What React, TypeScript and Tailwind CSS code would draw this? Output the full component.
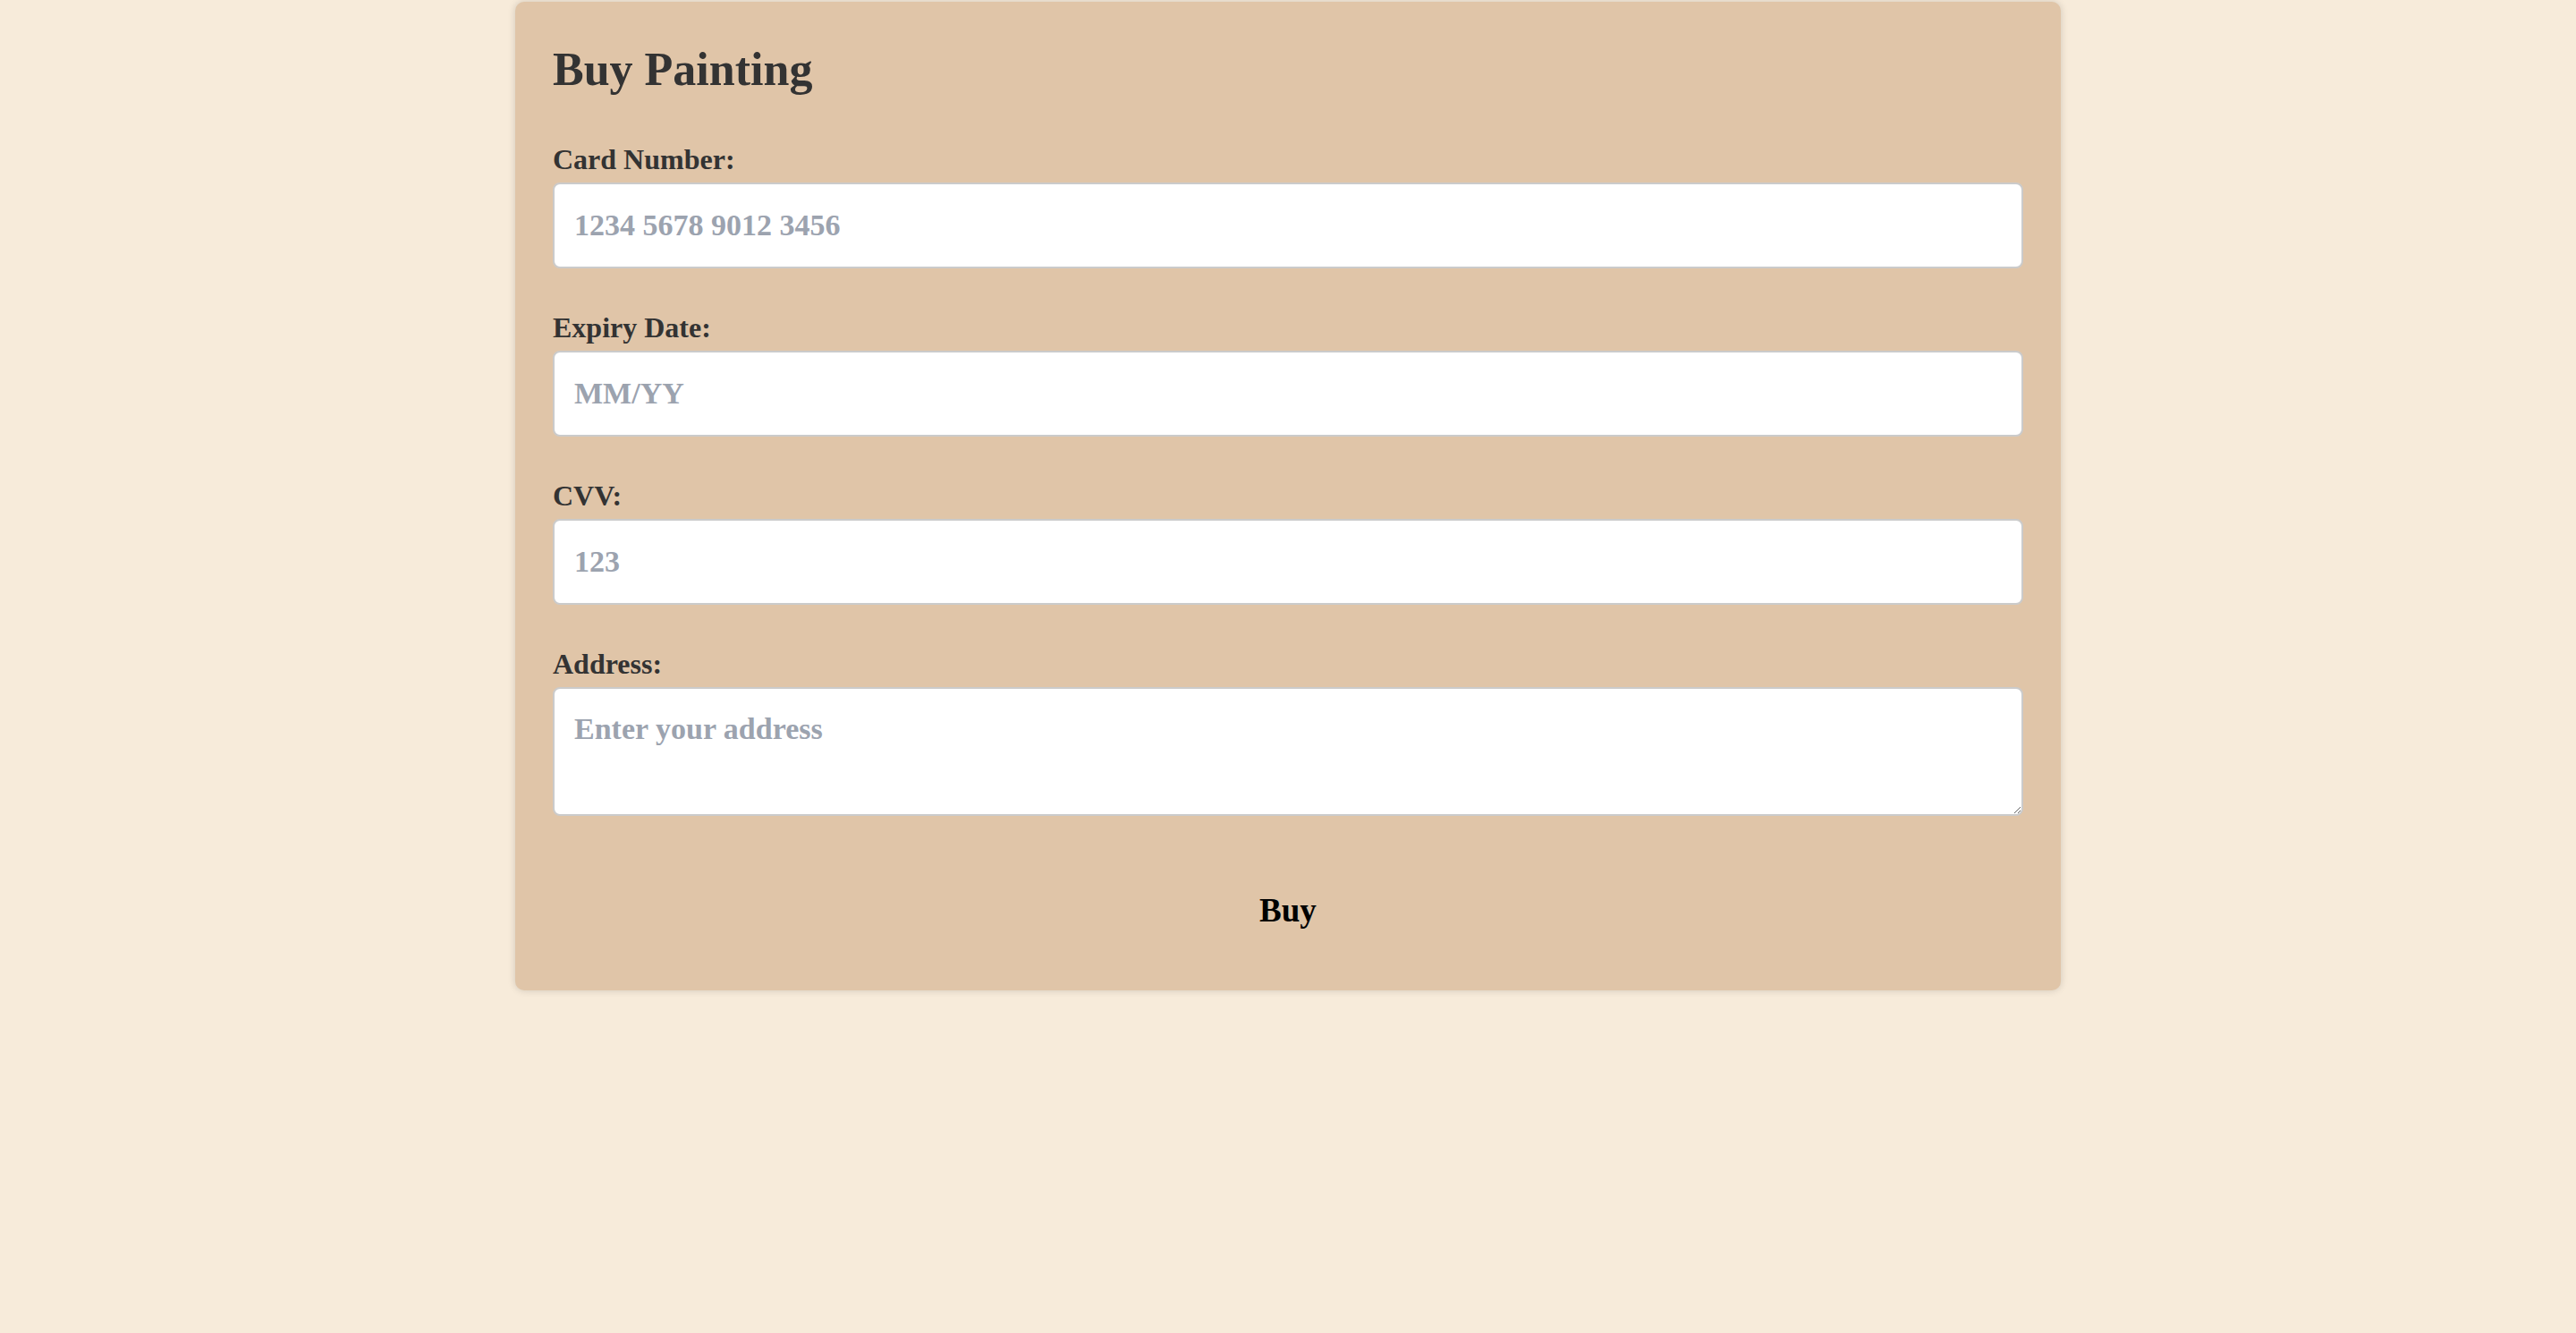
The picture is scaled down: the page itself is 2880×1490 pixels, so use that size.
import { useState } from "react";

const fields = [
  { id: "cardNumber", label: "Card Number:", placeholder: "1234 5678 9012 3456" },
  { id: "expiry", label: "Expiry Date:", placeholder: "MM/YY" },
  { id: "cvv", label: "CVV:", placeholder: "123" },
];

export default function App() {
  const [values, setValues] = useState<{ [key: string]: string }>({});
  const [address, setAddress] = useState("");

  const handleChange = (id: string, value: string) => {
    setValues((prev) => ({ ...prev, [id]: value }));
  };

  return (
    <div
      className="min-h-screen bg-[#f7ebda] pt-[2px]"
      style={{ fontFamily: '"Liberation Serif", "Times New Roman", serif' }}
    >
      <div className="mx-auto w-[60%] rounded-[10px] bg-[#e0c5a8] px-[42px] pt-[46px] pb-[47px] shadow-[0_0_8px_rgba(0,0,0,0.16)]">
        <h2 className="text-[52px] leading-[60px] font-bold text-[#333]">Buy Painting</h2>

        <form className="mt-[50px]" onSubmit={(e) => e.preventDefault()}>
          {fields.map((field, index) => (
            <div key={field.id} className={index > 0 ? "mt-[46px]" : ""}>
              <label
                htmlFor={field.id}
                className="block text-[32px] leading-[40px] font-bold text-[#333] mb-[6px]"
              >
                {field.label}
              </label>
              <input
                id={field.id}
                type="text"
                value={values[field.id] || ""}
                onChange={(e) => handleChange(field.id, e.target.value)}
                placeholder={field.placeholder}
                className="block w-full h-[96px] rounded-[8px] border-2 border-[#cbcbcb] bg-white px-[22px] text-[34px] font-bold text-[#333] placeholder:text-[#9ca3af] outline-none"
              />
            </div>
          ))}

          <div className="mt-[46px]">
            <label
              htmlFor="address"
              className="block text-[32px] leading-[40px] font-bold text-[#333] mb-[6px]"
            >
              Address:
            </label>
            <textarea
              id="address"
              value={address}
              onChange={(e) => setAddress(e.target.value)}
              placeholder="Enter your address"
              className="block w-full h-[144px] rounded-[8px] border-2 border-[#cbcbcb] bg-white px-[22px] pt-[25px] text-[34px] leading-[40px] font-bold text-[#333] placeholder:text-[#9ca3af] outline-none"
            />
          </div>

          <div className="mt-[64px] flex justify-center">
            <button
              type="submit"
              className="bg-transparent py-[20px] px-[30px] text-[37px] leading-[44px] font-bold text-black"
            >
              Buy
            </button>
          </div>
        </form>
      </div>
    </div>
  );
}
